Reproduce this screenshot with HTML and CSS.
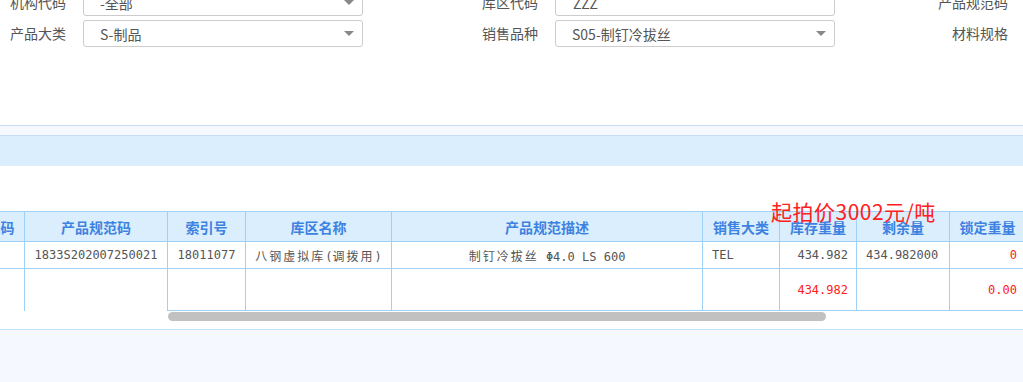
FILE: index.html
```html
<!DOCTYPE html>
<html lang="zh-CN">
<head>
  <meta charset="UTF-8" />
  <meta name="viewport" content="width=device-width, initial-scale=1" />
  <title>库存查询</title>
  <link rel="stylesheet" href="styles.css">
</head>
<body>

  <div class="query">
    <label class="lbl">机构代码</label>
    <div class="sel"><span>-全部</span><i class="caret"></i></div>
    <label class="lbl">库区代码</label>
    <div class="sel input"><span>ZZZ</span></div>
    <label class="lbl last">产品规范码</label>

    <label class="lbl">产品大类</label>
    <div class="sel"><span>S-制品</span><i class="caret"></i></div>
    <label class="lbl">销售品种</label>
    <div class="sel"><span>S05-制钉冷拔丝</span><i class="caret"></i></div>
    <label class="lbl last">材料规格</label>
  </div>

  <div class="toolbar">
    <div class="toolbar-top"></div>
    <div class="toolbar-main"></div>
  </div>

  <div class="grid-wrap">
    <div class="price-note">起拍价3002元/吨</div>
    <table class="grid">
      <colgroup>
        <col style="width:76px">
        <col style="width:143px">
        <col style="width:78px">
        <col style="width:146px">
        <col style="width:311px">
        <col style="width:77px">
        <col style="width:77px">
        <col style="width:93px">
        <col style="width:76px">
      </colgroup>
      <thead>
        <tr>
          <th>物料编码</th>
          <th>产品规范码</th>
          <th>索引号</th>
          <th>库区名称</th>
          <th>产品规范描述</th>
          <th>销售大类</th>
          <th>库存重量</th>
          <th>剩余量</th>
          <th>锁定重量</th>
        </tr>
      </thead>
      <tbody>
        <tr class="data">
          <td></td>
          <td class="c">1833S202007250021</td>
          <td class="c">18011077</td>
          <td class="c"><span class="cjk">八钢虚拟库</span>(<span class="cjk">调拨用</span>)</td>
          <td class="c"><span class="cjk">制钉冷拔丝</span> Φ4.0 LS 600</td>
          <td>TEL</td>
          <td class="r">434.982</td>
          <td>434.982000</td>
          <td class="r red">0</td>
        </tr>
        <tr class="total">
          <td class="frozen"></td>
          <td class="frozen"></td>
          <td></td>
          <td></td>
          <td></td>
          <td></td>
          <td class="r red">434.982</td>
          <td></td>
          <td class="r red">0.00</td>
        </tr>
      </tbody>
    </table>
    <div class="hscroll"><div class="thumb"></div></div>
  </div>

  <div class="footer-band"></div>

</body>
</html>
```

FILE: styles.css
```css
body {
  margin: 0;
  font-family: "Noto Sans CJK SC", "Noto Sans", sans-serif;
  background-color: #fff;
  overflow: hidden;
}

/* Formulaire de recherche */
.query {
  display: grid;
  grid-template-columns: 83px 280px 192px 280px 1fr;
  grid-auto-rows: 27px;
  row-gap: 4px;
  margin-top: -11px;
  height: 136px;
}

.lbl {
  text-align: right;
  padding-right: 17px;
  line-height: 27px;
  font-size: 14px;
  color: #555;
}

.lbl.last {
  padding-right: 15px;
}

.sel {
  display: flex;
  align-items: center;
  justify-content: space-between;
  box-sizing: border-box;
  height: 27px;
  padding: 0 8px 0 16px;
  border: 1px solid #ccc;
  border-radius: 3px;
  font-size: 14px;
  color: #555;
}

.sel.input {
  padding-left: 17px;
}

.caret {
  width: 0;
  height: 0;
  border-left: 5px solid transparent;
  border-right: 5px solid transparent;
  border-top: 5px solid #888;
}

/* Barre d'outils */
.toolbar-top {
  height: 9px;
  border-top: 1px solid #c5dcf3;
  background-color: #f5f9ff;
}

.toolbar-main {
  height: 30px;
  border-top: 1px solid #c5dcf3;
  background-color: #dbeefd;
  margin-bottom: 45px;
}

/* Tableau */
.grid-wrap {
  position: relative;
}

.price-note {
  position: absolute;
  top: -15px;
  left: 771px;
  font-size: 21px;
  letter-spacing: 0.5px;
  line-height: 30px;
  color: #ff2020;
  z-index: 2;
  white-space: nowrap;
}

.grid {
  margin-left: -52px;
  width: 1077px;
  table-layout: fixed;
  border-collapse: collapse;
}

.grid th,
.grid td {
  border: 1px solid #9fd0f5;
  white-space: nowrap;
  overflow: hidden;
  padding: 0 9px;
}

.grid th {
  height: 29px;
  background-color: #dbeefd;
  color: #3d82e0;
  font-size: 14px;
  font-weight: bold;
  text-align: center;
}

.grid td {
  font-family: "DejaVu Sans Mono", "Noto Sans CJK SC", monospace;
  font-size: 12px;
  color: #555;
}

.grid td .cjk {
  letter-spacing: 2px;
}

.grid tr.data td {
  height: 26px;
}

.grid tr.total td {
  height: 41px;
}

.grid td.frozen {
  border-bottom: none;
}

.grid td.c {
  text-align: center;
}

.grid td.r {
  text-align: right;
  padding-right: 8px;
}

.grid td.red {
  color: #ff1a1a;
}

.hscroll {
  height: 10px;
  margin-top: 1px;
  padding-bottom: 7px;
}

.thumb {
  margin-left: 168px;
  width: 658px;
  height: 9px;
  border-radius: 5px;
  background-color: #c1c1c1;
}

.footer-band {
  height: 60px;
  border-top: 1px solid #bde0fb;
  background-color: #f5f9ff;
}
```
